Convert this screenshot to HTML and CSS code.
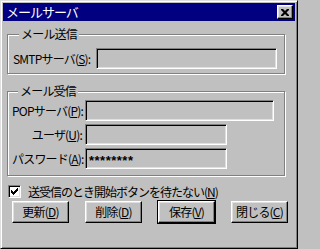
FILE: index.html
```html
<!DOCTYPE html>
<html lang="ja">
<head>
<meta charset="utf-8">
<title>メールサーバ</title>
<link rel="stylesheet" href="styles.css">
</head>
<body>
<div class="window">
  <div class="titlebar">
    <span class="title">メールサーバ</span>
    <span class="close-btn">
      <svg width="8" height="7" viewBox="0 0 8 7"><path d="M0 0h2l2 2 2-2h2v1L5.5 3.5 8 6v1H6L4 5 2 7H0V6l2.5-2.5L0 1z" fill="#000"/></svg>
    </span>
  </div>
  <div class="content">
    <div class="group group-send">
      <div class="group-title">メール送信</div>
      <div class="row">
        <span class="label label-smtp">SMTPサーバ(<u>S</u>):</span>
        <div class="edit edit-smtp"></div>
      </div>
    </div>
    <div class="group group-recv">
      <div class="group-title">メール受信</div>
      <div class="row">
        <span class="label label-right">POPサーバ(<u>P</u>):</span>
        <div class="edit edit-pop"></div>
      </div>
      <div class="row">
        <span class="label label-right">ユーザ(<u>U</u>):</span>
        <div class="edit edit-short"></div>
      </div>
      <div class="row">
        <span class="label label-right">パスワード(<u>A</u>):</span>
        <div class="edit edit-short"><span class="pw">********</span></div>
      </div>
    </div>
    <div class="check-row">
      <span class="checkbox">
        <svg width="7" height="7" viewBox="0 0 7 7"><path d="M0 2h1v1h1v1h1V3h1V2h1V1h1V0h1v3H6v1H5v1H4v1H3v1H2V6H1V5H0z" fill="#000"/></svg>
      </span>
      <span class="check-label">送受信のとき開始ボタンを待たない(<u>N</u>)</span>
    </div>
    <div class="buttons">
      <span class="btn">更新(<u>D</u>)</span>
      <span class="btn">削除(<u>D</u>)</span>
      <span class="btn btn-default">保存(<u>V</u>)</span>
      <span class="btn">閉じる(<u>C</u>)</span>
    </div>
  </div>
</div>
</body>
</html>
```

FILE: styles.css
```css
html, body {
  margin: 0;
  padding: 0;
  background: #c0c0c0;
}

.window {
  width: 298px;
  height: 249px;
  box-sizing: border-box;
  background: #c0c0c0;
  border: 1px solid;
  border-color: #dfdfdf #000 #000 #dfdfdf;
  box-shadow: inset 1px 1px #fff, inset -1px -1px #808080;
  padding: 2px;
  font-family: "Noto Sans CJK JP", "Liberation Sans", sans-serif;
  font-size: 12px;
  letter-spacing: -0.8px;
  color: #000;
  overflow: hidden;
}

.titlebar {
  height: 18px;
  background: #000080;
  color: #fff;
  display: flex;
  align-items: center;
  justify-content: space-between;
  padding: 0 2px 0 3px;
}

.title {
  font-size: 13px;
  line-height: 18px;
  letter-spacing: -1px;
}

.close-btn {
  width: 16px;
  height: 14px;
  box-sizing: border-box;
  background: #c0c0c0;
  border: 1px solid;
  border-color: #fff #000 #000 #fff;
  box-shadow: inset -1px -1px #808080, inset 1px 1px #dfdfdf;
  display: flex;
  align-items: center;
  justify-content: center;
}

.close-btn svg {
  display: block;
}

.content {
  display: flex;
  flex-direction: column;
}

.group {
  border: 1px solid #808080;
  box-shadow: inset 1px 1px #fff, 1px 1px #fff;
  width: 278px;
  box-sizing: border-box;
  margin-left: 4px;
  display: flex;
  flex-direction: column;
}

.group-title {
  align-self: flex-start;
  margin: -8px 0 0 6px;
  padding: 0 2px;
  background: #c0c0c0;
  line-height: 14px;
  height: 14px;
}

.group-send {
  margin-top: 13px;
  padding: 0 0 4px 5px;
}

.group-send .row {
  margin-top: 7px;
}

.group-recv {
  margin-top: 17px;
  padding: 0 0 6px 4px;
  gap: 3px;
}

.group-recv .group-title {
  margin-bottom: -1px;
}

.row {
  display: flex;
  align-items: center;
  height: 21px;
}

.label {
  white-space: nowrap;
  line-height: 14px;
}

.label-smtp {
  width: 83px;
}

.label-right {
  width: 70px;
  text-align: right;
  margin-right: 3px;
}

.edit {
  height: 21px;
  box-sizing: border-box;
  border: 1px solid;
  border-color: #808080 #fff #fff #808080;
  box-shadow: inset 1px 1px #000, inset -1px -1px #dfdfdf;
  background: #c0c0c0;
  display: flex;
  align-items: center;
  padding-left: 3px;
}

.edit-smtp {
  width: 181px;
}

.edit-pop {
  width: 189px;
}

.edit-short {
  width: 142px;
}

.pw {
  font-family: "Liberation Sans", sans-serif;
  font-size: 13px;
  font-weight: bold;
  letter-spacing: 0.5px;
  line-height: 12px;
  padding-top: 4px;
}

.check-row {
  display: flex;
  align-items: center;
  margin: 9px 0 0 5px;
  height: 13px;
}

.checkbox {
  width: 13px;
  height: 13px;
  box-sizing: border-box;
  border: 1px solid;
  border-color: #808080 #fff #fff #808080;
  box-shadow: inset 1px 1px #000, inset -1px -1px #dfdfdf;
  background: #fff;
  display: flex;
  align-items: center;
  justify-content: center;
}

.checkbox svg {
  display: block;
}

.check-label {
  margin-left: 7px;
  white-space: nowrap;
  line-height: 14px;
  letter-spacing: -1px;
}

.buttons {
  display: flex;
  gap: 16px;
  margin: 3px 0 0 9px;
}

.btn {
  width: 57px;
  height: 22px;
  box-sizing: border-box;
  border: 1px solid;
  border-color: #fff #000 #000 #fff;
  box-shadow: inset -1px -1px #808080, inset 1px 1px #dfdfdf;
  display: flex;
  align-items: center;
  justify-content: center;
  white-space: nowrap;
  line-height: 14px;
}

.btn-default {
  outline: 1px solid #000;
}

u {
  text-decoration: underline;
  text-underline-offset: 1px;
}
```
